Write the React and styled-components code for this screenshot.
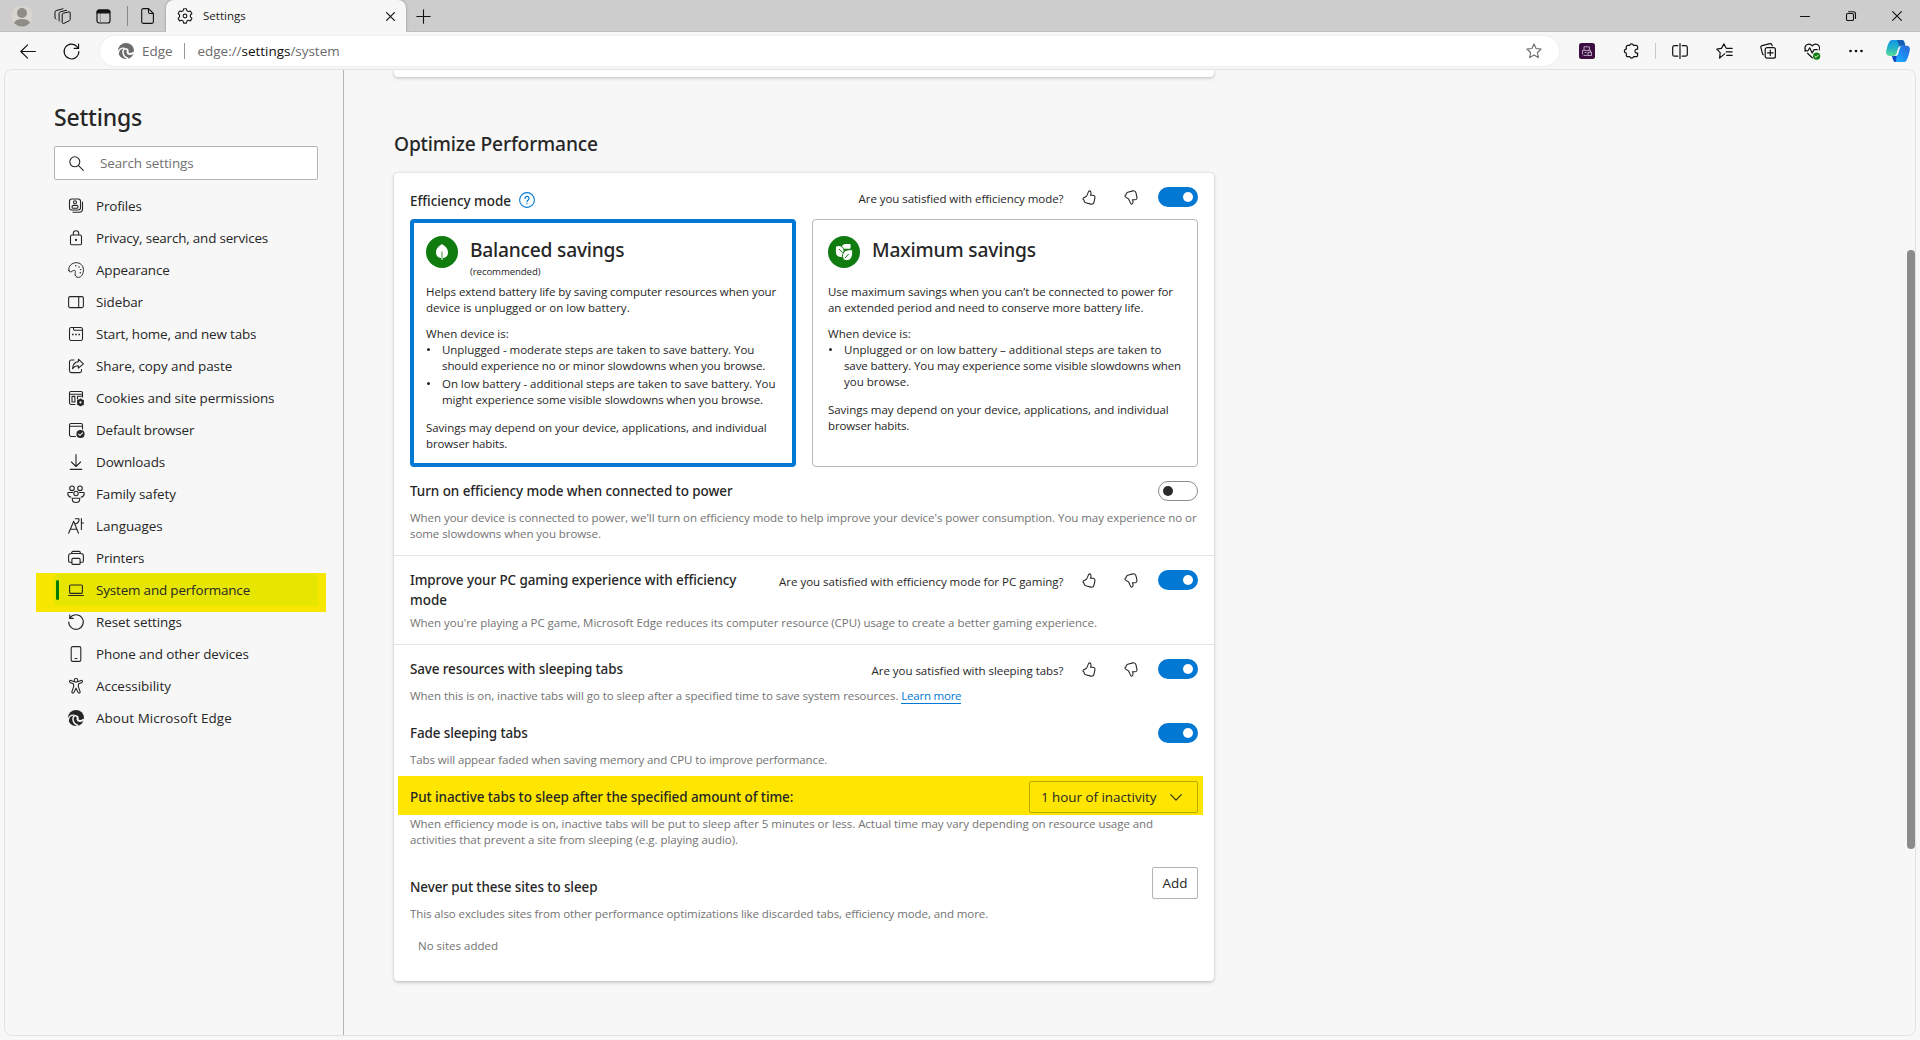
import React from "react";
import styled, { createGlobalStyle, css } from "styled-components";

const sans = `"Open Sans", "Noto Sans", "Segoe UI", sans-serif`;
const medium = `"Noto Sans", "Open Sans", "Segoe UI", sans-serif`;

const GlobalStyle = createGlobalStyle`
  *, *::before, *::after { box-sizing: border-box; }
  body {
    margin: 0;
    background: #f7f7f7;
    color: #262626;
    font-family: ${sans};
    overflow: hidden;
  }
  svg { display: block; flex: none; overflow: visible; }
`;

/* ---------- Icons ---------- */

const Stroke = styled.svg.attrs((p) => ({
  width: p.$w || 16,
  height: p.$h || 16,
  viewBox: `0 0 ${p.$w || 16} ${p.$h || 16}`,
  fill: "none",
  stroke: "currentColor",
  strokeLinecap: "round",
  strokeLinejoin: "round",
}))`
  stroke-width: ${(p) => p.$sw || 1.1};
`;

const STAR = "M8 .9l2.1 4.6 5 .6-3.7 3.4 1 5L8 12.100l-4.400 2.400 1-5L.9 6.100l5-.6z";

const Avatar = () => (
  <svg width="22" height="22" viewBox="0 0 22 22">
    <defs>
      <clipPath id="avatarClip"><circle cx="11" cy="11" r="10.500" /></clipPath>
    </defs>
    <circle cx="11" cy="11" r="10.500" fill="#d8d5d1" />
    <circle cx="11" cy="8" r="5" fill="#8f8b87" />
    <ellipse cx="11" cy="18.500" rx="8" ry="4.600" fill="#8f8b87" clipPath="url(#avatarClip)" />
  </svg>
);

const WorkspacesIcon = () => (
  <Stroke $w={17} $h={16} $sw={1}>
    <path d="M8.200 6.400a1.200 1.200 0 0 1 .9-1.100l6-1.400a.9.9 0 0 1 1.100.9v6.700a1.200 1.200 0 0 1-.5 1l-5.800 2.900a1.100 1.100 0 0 1-1.700-1z" />
    <path d="M5.700 13.200l-.6-.8V5.300A1.500 1.500 0 0 1 6.200 3.900L12.600 2.300M2 11.100l-1-1V4.200a1.600 1.600 0 0 1 1.200-1.600L9 .8" />
  </Stroke>
);

const TabActionsIcon = () => (
  <Stroke $w={15} $h={15} $sw={1.2}>
    <rect x="1" y="1" width="13" height="13" rx="2.200" />
    <path d="M1.300 3V2.800A1.500 1.500 0 0 1 2.900 1.200h9a1.700 1.700 0 0 1 1.700 1.700V3.800H1.300z" fill="currentColor" />
    <path d="M4.300 4v9.500" strokeWidth="1" opacity=".3" />
  </Stroke>
);

const PageIcon = () => (
  <Stroke $w={13} $h={16}>
    <path d="M2.300.6h5.200l4.900 4.900v8.300a1.600 1.600 0 0 1-1.600 1.600H2.300A1.600 1.600 0 0 1 .7 13.800V2.200A1.600 1.600 0 0 1 2.300.6zM7.500.8v3.500a1.200 1.200 0 0 0 1.200 1.200h3.500" />
  </Stroke>
);

const GearIcon = () => (
  <Stroke>
    <circle cx="8" cy="8" r="1.900" />
    <path d="M6.600.8h2.800l.5 2 1.500.8 2-.6 1.500 2.500-1.500 1.500v1.900l1.500 1.500-1.500 2.500-2-.6-1.500.8-.5 2H6.600l-.5-2-1.500-.8-2 .6L1.100 10.400l1.500-1.500V7L1.100 5.500 2.600 3l2 .6 1.500-.8z" />
  </Stroke>
);

const CrossIcon = ({ size = 9, width = 1.3 }) => (
  <Stroke $w={size} $h={size} $sw={width}>
    <path d={`M.6.6l${size - 1.2} ${size - 1.2}M${size - 0.6}.6L.6 ${size - 0.6}`} />
  </Stroke>
);

const PlusIcon = () => (
  <Stroke $w={15} $h={15} $sw={1.1}>
    <path d="M7.500.8v13.400M.8 7.500h13.400" />
  </Stroke>
);

const MinimizeIcon = () => (
  <Stroke $w={10} $h={10} $sw={1}>
    <path d="M.5 5.500h9" />
  </Stroke>
);

const RestoreIcon = () => (
  <Stroke $w={10} $h={10} $sw={1.1}>
    <rect x=".5" y="2.500" width="7" height="7" rx="1.300" />
    <path d="M2.600.7h4.700a2.200 2.200 0 0 1 2.200 2.200v4.600" />
  </Stroke>
);

const BackIcon = () => (
  <Stroke $w={16} $h={15} $sw={1.1}>
    <path d="M15.400 7.500H.8M7.600.8L.8 7.500l6.800 6.700" />
  </Stroke>
);

const ReloadIcon = () => (
  <Stroke $w={17} $h={17} $sw={1.1}>
    <path d="M15.900 8.500a7.400 7.400 0 1 1-1.600-4.600l1.200 1.400M15.600 1v4.400h-4.400" />
  </Stroke>
);

const EdgeIcon = () => (
  <svg width="16" height="16" viewBox="0 0 16 16">
    <circle cx="8" cy="8" r="8" fill="currentColor" />
    <g fill="none" stroke="var(--edge-gap)" strokeLinecap="round">
      <path d="M.3 10.600C.3 7 3.200 4.700 6 5.100" strokeWidth="1.300" />
      <path d="M8.600 6.100c-2.400-.9-4 .9-3.600 3.600.4 2.600 2.200 4.800 4.600 5.600" strokeWidth="1.500" />
      <path d="M9.100 6.500c1.300.8.300 2 .5 3 .4 1.900 3.900 1.900 5.800.3" strokeWidth="2" />
    </g>
  </svg>
);

const StarIcon = () => (
  <Stroke><path d={STAR} /></Stroke>
);

const ScannerExtensionIcon = () => (
  <svg width="16" height="16" viewBox="0 0 16 16">
    <rect width="16" height="16" rx="2.500" fill="#3b1040" />
    <g fill="none" stroke="#c9b4ce" strokeWidth=".9">
      <path d="M5 7V3.800h5.400V7M3.500 11.500V7.400h8V9M4.500 12.400h4M5.500 9.500h2" />
      <rect x="9" y="9.300" width="3.400" height="3.200" />
    </g>
  </svg>
);

const PuzzleIcon = () => (
  <Stroke $w={16} $h={16} $sw={1.2}>
    <path d="M3.700 2.400h2a1.900 1.900 0 0 1 3.700 0h2.800a1.400 1.400 0 0 1 1.400 1.400v2.400a2 2 0 1 0 0 3.800v2.300a1.400 1.400 0 0 1-1.400 1.400H9.500a1.900 1.900 0 0 1-3.700 0H3.700a1.400 1.400 0 0 1-1.400-1.400V10a1.900 1.900 0 0 1 0-3.800V3.800a1.400 1.400 0 0 1 1.400-1.400z" />
  </Stroke>
);

const SplitIcon = () => (
  <Stroke $w={16} $h={16} $sw={1.2}>
    <path d="M8 .6v14.800M5.800 2.600H2.500A1.800 1.800 0 0 0 .7 4.400v7a1.800 1.800 0 0 0 1.800 1.800h3.300M10.200 2.600h3.300a1.800 1.800 0 0 1 1.800 1.800v7a1.800 1.800 0 0 1-1.800 1.800h-3.300" />
  </Stroke>
);

const FavoritesIcon = () => (
  <Stroke $w={17} $h={16} $sw={1.2}>
    <path d="M8.700 10.800l-.7.6-4.400 3.600.6-5.300L.8 6.200l4.600-.8L8 .9l1.900 3.900M10.700 5.300h5.500M10.200 8.800h6M10.700 12.300h5.500" />
  </Stroke>
);

const CollectionsIcon = () => (
  <Stroke $w={16} $h={16} $sw={1.2}>
    <rect x="5.200" y="4.600" width="10.200" height="10.600" rx="2" />
    <path d="M10.300 7.200v5.400M7.600 9.900H13M12.200 2.700L11.800 1.600A1.600 1.600 0 0 0 9.900.6L2 2.600A1.600 1.600 0 0 0 .9 4.600l1.600 6.100a1.600 1.600 0 0 0 .9 1" />
  </Stroke>
);

const EssentialsIcon = () => (
  <Stroke $w={17} $h={17} $sw={1.2}>
    <path d="M1.400 7C-.2 3.500 3 .2 6.300 1.400c.8.300 1.400.8 2 1.500.6-.7 1.200-1.200 2-1.500 3.300-1.200 6.500 2.100 5 5.600M3.500 10.300l4.800 4.500M.7 7.800h3.200l1.800-3 2.500 5.200 1.900-3.400h3.200" />
    <circle cx="12.600" cy="13.200" r="3.600" fill="#107c10" stroke="none" />
    <path d="M11 13.400l1.100 1 2-2.200" stroke="#fff" strokeWidth="1" />
  </Stroke>
);

const DotsIcon = () => (
  <svg width="14" height="4" viewBox="0 0 14 4" fill="currentColor">
    <circle cx="1.500" cy="2" r="1.350" /><circle cx="7" cy="2" r="1.350" /><circle cx="12.500" cy="2" r="1.350" />
  </svg>
);

const CopilotIcon = () => (
  <svg width="24" height="22" viewBox="0 0 24 22">
    <defs>
      <linearGradient id="cpA" x1="0" y1="0" x2="0" y2="1">
        <stop offset="0" stopColor="#1597e4" /><stop offset=".5" stopColor="#22b3c9" /><stop offset="1" stopColor="#5bdc95" />
      </linearGradient>
      <linearGradient id="cpB" x1="1" y1="0" x2="0" y2="1">
        <stop offset="0" stopColor="#2f63d8" /><stop offset=".5" stopColor="#1b8cf2" /><stop offset="1" stopColor="#1fc0ff" />
      </linearGradient>
    </defs>
    <path d="M6.500 0h9.300c1.700 0 2.300 1.200 2.800 3l.8 2.700h-3.200c-2 0-2.900 1-3.400 2.700l-1.600 5.200c-.5 1.600-1.300 2.300-3 2.300H3.500C1 15.900-.3 14 .2 11.300 1 7.300 2 4 3.300 1.800 4.100.5 5 0 6.500 0z" fill="url(#cpA)" />
    <path d="M11 0h4.800c1.700 0 2.300 1.200 2.800 3l.8 2.700h-3.200c-1.300 0-2.100.4-2.700 1.100z" fill="#175fb5" />
    <path d="M17.500 22H10c-1.900 0-2.600-1.200-3.100-3L6 15.900h2.200c2 0 3-.9 3.500-2.600l1.600-5.200c.5-1.600 1.200-2.400 2.900-2.400h4.300c2.500 0 3.800 1.900 3.300 4.600-.8 4-1.800 7.300-3.100 9.700-.7 1.400-1.700 2-3.200 2z" fill="url(#cpB)" />
    <path d="M6 15.900h2.200c1.300 0 2-.4 2.600-1l-.9 7C8 22 7.400 20.800 6.900 19z" fill="#1a46c8" />
    <path d="M16.200 5.700c-2.200 0-3.400.7-4.200 3l-1.300 4.300c-.5 1.700-1.300 2.700-2.700 2.900 2 .3 3.600-.3 4.300-2.500l1.400-4.700c.5-1.600 1-2.800 2.500-3z" fill="#f7f7f7" />
  </svg>
);

const SearchIcon = () => (
  <Stroke $w={15} $h={15} $sw={1.1}>
    <circle cx="5.800" cy="5.800" r="5" /><path d="M9.600 9.600l4.700 4.700" />
  </Stroke>
);

const HelpIcon = () => (
  <Stroke>
    <circle cx="8" cy="8" r="7.400" />
    <path d="M6 6.400a2 2 0 1 1 3.300 1.500C8.500 8.500 8 8.800 8 9.700M8 11.600v.2" strokeWidth="1.200" />
  </Stroke>
);

const ThumbIcon = () => (
  <Stroke $w={14} $h={15} $sw={1.1}>
    <path d="M7.300.9c1.500 0 2 1.600 1.600 3.100L8.500 5.300h2.400c1.500 0 2.300 1.100 2 2.500l-.9 4.300c-.4 1.500-1.600 2.400-3.200 2l-5-1.300c-1-.3-1.400-.8-1.600-1.600L1.900 10c-.9-.3-1.200-1-.7-1.700.7-1 2.300-1 3.300-2.200C5.700 4.800 6.200.9 7.300.9z" />
  </Stroke>
);

const ChevronIcon = () => (
  <Stroke $w={12} $h={7} $sw={1.1}>
    <path d="M.7.7L6 6.200 11.300.7" />
  </Stroke>
);

const LeafBadge = () => (
  <svg width="32" height="32" viewBox="0 0 32 32">
    <circle cx="16" cy="16" r="16" fill="#107c10" />
    <path d="M16 8c2.500 1.700 6 4 6 8.500 0 3.500-2.300 5.500-5.500 5.700V24h-1v-1.800C12.300 22 10 20 10 16.500 10 12 13.500 9.700 16 8z" fill="#fff" />
    <path d="M16 15.500v6.800" stroke="#6fb06f" strokeWidth="1.400" />
  </svg>
);

const LeavesBadge = () => (
  <svg width="32" height="32" viewBox="0 0 32 32">
    <circle cx="16" cy="16" r="16" fill="#107c10" />
    <path d="M8 10.600c3.200-1.200 7-.4 7.500 3.400.3 2.500-.6 4.800-1.300 6.900-3.900.6-6.400-1.400-6.300-5.300z" fill="#fff" />
    <path d="M13.800 10c1.700-2.200 5.300-2 8.700-1.800.3 1.700.2 3.200-.4 4.600H16c-.5-1.300-1.200-2.100-2.200-2.800z" fill="#fff" />
    <path d="M24.600 13.700c.3 5.800-.6 10.900-6 10.900-5.500 0-5.300-7.600-.9-10 1.700-.9 4.200-.9 6.900-.9z" fill="#fff" stroke="#107c10" strokeWidth="1" />
    <path d="M11.300 13.300l3.200 3.400M17.200 21.800l3.300-3.600" stroke="#107c10" strokeWidth="1" strokeLinecap="round" />
  </svg>
);

const navIcons = {
  profiles: (
    <Stroke>
      <rect x="1.500" y="1" width="11" height="11" rx="2.200" />
      <circle cx="7" cy="4.300" r="1.500" />
      <rect x="4" y="7.400" width="6" height="2.900" rx="1.300" />
      <path d="M14.500 4v7a3.200 3.200 0 0 1-3.200 3.200H5" />
    </Stroke>
  ),
  privacy: (
    <Stroke>
      <rect x="2.500" y="5" width="11" height="9.800" rx="1.400" />
      <path d="M5.300 4.800V3.400a2.700 2.700 0 0 1 5.400 0v1.400" />
      <circle cx="8" cy="9.900" r=".6" fill="currentColor" />
    </Stroke>
  ),
  appearance: (
    <Stroke $sw={1}>
      <path d="M.9 8.500C0 4 4 .7 8.500.7c3.800 0 6.700 2.900 6.900 6.600.2 3.900-1.600 8.100-5 8.100-2.200 0-3.600-1.700-3.300-3.700.2-1.500.8-3-.6-3.300-1.800-.3-2.700 1.700-4.300 1.500C1.500 9.800 1 9.300.9 8.500z" />
      <path d="M7.800 3.700h.1M11 4.900h.1M12.600 7.600h.1M12.200 10.700h.1" strokeWidth="1.400" />
    </Stroke>
  ),
  sidebar: (
    <Stroke>
      <rect x=".6" y="2.600" width="14.800" height="11" rx="1.500" /><path d="M10.700 2.700v10.800" />
    </Stroke>
  ),
  start: (
    <Stroke>
      <rect x="1.500" y="1.500" width="13" height="13" rx="1.800" />
      <path d="M5.500 1.700V3a1.200 1.200 0 0 0 1.200 1.200h7.600" />
      <path d="M4 8.500h1.600M7.200 8.500h1.600M10.400 8.500H12" strokeWidth="1.700" strokeLinecap="butt" />
    </Stroke>
  ),
  share: (
    <Stroke>
      <path d="M6 2H3.300A1.800 1.800 0 0 0 1.500 3.800v9A1.800 1.800 0 0 0 3.300 14.600h8.400a1.800 1.800 0 0 0 1.800-1.800v-1.300" />
      <path d="M10.400 1.200l5 4.600-5 4.400V7.700C7.800 7.500 6 8.600 4.500 10.600c.3-3.800 2.400-6.600 5.900-7z" />
    </Stroke>
  ),
  cookies: (
    <Stroke>
      <path d="M7 14.500H3.300a1.800 1.800 0 0 1-1.800-1.800V2.800A1.300 1.300 0 0 1 2.800 1.500h10.400a1.300 1.300 0 0 1 1.300 1.300V7M1.500 4.200h13M9.500 6.300h5M9.500 6.300V9" />
      <rect x="4" y="6.400" width="2.900" height="5.600" />
      <circle cx="12.500" cy="12.400" r="2.400" strokeWidth="2" />
      <path d="M12.500 8.600v7.600M9.200 10.500l6.600 3.800M15.800 10.500l-6.600 3.800" strokeWidth="1.500" strokeLinecap="butt" />
      <circle cx="12.500" cy="12.400" r="1.100" fill="#f7f7f7" stroke="none" />
    </Stroke>
  ),
  browser: (
    <Stroke>
      <path d="M7.500 14.500H3.300a1.800 1.800 0 0 1-1.800-1.800V3A1.500 1.500 0 0 1 3 1.500h10A1.500 1.500 0 0 1 14.500 3v4M1.500 4.300h13" />
      <circle cx="12.500" cy="12" r="4.100" fill="currentColor" stroke="none" />
      <path d="M10.600 12.200l1.400 1.200 2.500-2.600" stroke="#f7f7f7" />
    </Stroke>
  ),
  downloads: (
    <Stroke>
      <path d="M8 .5v11.700M3.400 8L8 12.500 12.600 8M2.300 15.400h11.400" />
    </Stroke>
  ),
  family: (
    <Stroke $w={18} $h={18}>
      <circle cx="5" cy="3.300" r="2.300" /><circle cx="13" cy="3.300" r="2.300" /><circle cx="9" cy="8.500" r="2.200" />
      <path d="M5.300 13.200h7.400v1c0 2-1.500 3.300-3.700 3.300s-3.700-1.300-3.700-3.300zM5.500 7.500H.9c-.4 2.300.9 4.200 3.100 4.700M12.500 7.500h4.600c.4 2.300-.9 4.200-3.100 4.700" />
    </Stroke>
  ),
  languages: (
    <Stroke>
      <path d="M.6 15.300L5.700 3.300 10.500 15.300M2.400 11.200h6.600M7.300.8H11c.2 2.300-1.200 4.500-3.700 5.300M13.400.5v11M13.500 5h2" />
    </Stroke>
  ),
  printers: (
    <Stroke>
      <path d="M3.700 3.500V2.700A1.300 1.300 0 0 1 5 1.400h6a1.300 1.300 0 0 1 1.300 1.300v.8M3.800 12.300H2A1.400 1.400 0 0 1 .6 10.900V6a2.500 2.500 0 0 1 2.500-2.500h9.800A2.500 2.500 0 0 1 15.400 6v4.900a1.400 1.400 0 0 1-1.400 1.400h-1.800" />
      <rect x="3.900" y="8.400" width="8.200" height="6" rx="1" />
    </Stroke>
  ),
  system: (
    <Stroke>
      <rect x="1.600" y="3" width="12.800" height="8.400" rx="1.200" /><path d="M.6 13.500h14.800" />
    </Stroke>
  ),
  reset: (
    <Stroke>
      <path d="M2.100 3.700A7.300 7.300 0 1 1 .7 8M1.700.8v3.600h3.600" />
    </Stroke>
  ),
  phone: (
    <Stroke>
      <rect x="3.200" y=".6" width="9.600" height="14.800" rx="1.500" /><path d="M7 12.500h2" />
    </Stroke>
  ),
  accessibility: (
    <Stroke>
      <circle cx="8" cy="2.300" r="1.800" />
      <path d="M6.200 3.800L3 2.500c-1.400-.5-2.200 1.400-.8 2l3.400 1.400v3L3.900 13.600c-.5 1.500 1.400 2.200 2 .8L8 10.200l2.100 4.200c.6 1.400 2.500.7 2-.8L10.400 8.900v-3l3.400-1.400c1.400-.6.6-2.500-.8-2L9.800 3.800" />
    </Stroke>
  ),
  about: <EdgeIcon />,
};

/* ---------- Browser chrome ---------- */

const Window = styled.div`
  display: flex;
  flex-direction: column;
  width: 1920px;
  height: 1040px;
  background: #f7f7f7;
`;

const TabStrip = styled.header`
  display: flex;
  height: 32px;
  flex: none;
  background: #cdcdcd;
  box-shadow: inset 0 -1px 0 #bfbfbf;
  color: #1b1b1b;
`;

const Slot = styled.div`
  display: flex;
  align-items: center;
  justify-content: center;
  flex: none;
  width: ${(p) => p.$w}px;
  height: ${(p) => p.$h || 32}px;
  color: #111;
`;

const Divider = styled.div`
  flex: none;
  width: 1px;
  height: ${(p) => p.$h}px;
  margin: ${(p) => p.$m || 0};
  background: ${(p) => p.$color};
`;

const Tab = styled.div`
  display: flex;
  align-items: center;
  flex: none;
  width: 240px;
  height: 32px;
  padding: 0 11px;
  border-radius: 8px 8px 0 0;
  background: #f7f7f7;
  box-shadow: 0 0 3px rgba(0, 0, 0, 0.3);
  clip-path: inset(0 -4px 0 -4px);
`;

const TabTitle = styled.span`
  flex: 1;
  margin-left: 10px;
  font-size: 11.52px;
  line-height: 16px;
  letter-spacing: 0.02px;
`;

const Spacer = styled.div`
  flex: 1;
`;

const Toolbar = styled.div`
  display: flex;
  flex: none;
  height: 37px;
  padding: 4px 3px 0 0;
`;

const AddressBar = styled.div`
  display: flex;
  align-items: center;
  flex: 1;
  height: 30px;
  margin-left: 13px;
  padding: 0 17px 0 18px;
  border-radius: 15px;
  background: #fff;
  box-shadow: 0 0 3px rgba(0, 0, 0, 0.08);
  color: #6b6b6b;
  --edge-gap: #fff;
`;

const AddressText = styled.span`
  margin-left: ${(p) => p.$ml}px;
  font-size: 13.44px;
  line-height: 20px;
  white-space: nowrap;

  b {
    font-weight: 400;
    color: #111;
  }
`;

/* ---------- Page frame ---------- */

const Page = styled.div`
  display: flex;
  flex: 1;
  min-height: 0;
  margin: 0 4px 4px;
  border: 1px solid #e2e2e2;
  border-radius: 8px;
  background: #f7f7f7;
  overflow: hidden;
`;

const Sidebar = styled.aside`
  flex: none;
  width: 339px;
  padding: 31px 24px 0 49px;
  border-right: 1px solid #b5b5b5;
`;

const SidebarTitle = styled.h1`
  margin: 0 0 13px;
  font: 500 23.04px/32px ${medium};
  letter-spacing: -0.2px;
`;

const SearchBox = styled.div`
  display: flex;
  align-items: center;
  width: 264px;
  height: 34px;
  padding-left: 14px;
  border: 1px solid #b4b4b4;
  border-radius: 2px;
  background: #fff;
  color: #262626;
`;

const SearchHint = styled.span`
  margin-left: 16px;
  color: #707070;
  font-size: 13.44px;
  line-height: 20px;
  letter-spacing: -0.09px;
`;

const Nav = styled.nav`
  display: flex;
  flex-direction: column;
  width: 264px;
  margin-top: 10px;
  isolation: isolate;
  --edge-gap: #f7f7f7;
`;

const NavItem = styled.a`
  display: flex;
  align-items: center;
  height: 32px;
  border-radius: 3px;
  font-size: 13.44px;
  line-height: 20px;
  letter-spacing: ${(p) => p.$ls}px;
  white-space: nowrap;

  ${(p) =>
    p.$active &&
    css`
      position: relative;
      background: #e6e600;

      &::before {
        content: "";
        position: absolute;
        inset: -1px -8px -6px -18px;
        background: #f7e600;
        z-index: -1;
      }
      &::after {
        content: "";
        position: absolute;
        left: 2px;
        top: 6px;
        width: 3px;
        height: 20px;
        border-radius: 1.5px;
        background: #007a00;
      }
    `}
`;

const NavIconBox = styled.span`
  display: flex;
  align-items: center;
  justify-content: center;
  width: 20px;
  margin: 0 10px 0 12px;
`;

const Main = styled.main`
  display: flex;
  flex-direction: column;
  flex: 1;
  padding-left: 50px;
`;

const Scrollbar = styled.div`
  flex: none;
  width: 8px;
  height: 599px;
  margin-top: 180px;
  border-radius: 4px;
  background: #8b8b8b;
`;

const cardShadow = css`
  background: #fff;
  box-shadow: 0 1.6px 3.6px rgba(0, 0, 0, 0.16), 0 0 2.900px rgba(0, 0, 0, 0.12);
`;

const CardTail = styled.div`
  width: 820px;
  height: 7px;
  flex: none;
  border-radius: 0 0 4px 4px;
  ${cardShadow}
`;

const SectionTitle = styled.h2`
  margin: 53px 0 15px;
  font: 500 19.2px/28px ${medium};
  letter-spacing: -0.16px;
`;

const Card = styled.section`
  width: 820px;
  height: 808px;
  border-radius: 4px;
  ${cardShadow}
`;

const Section = styled.div`
  padding: 14px 16px ${(p) => p.$pb}px;

  & + & {
    border-top: 1px solid #e5e5e5;
  }
`;

const Row = styled.div`
  display: flex;
  align-items: flex-start;
  margin-top: ${(p) => p.$mt || 0}px;
  min-height: ${(p) => p.$h || 20}px;
`;

const RowTitle = styled.h3`
  display: flex;
  flex: 1;
  margin: ${(p) => p.$mt || 0}px 0 0;
  font: 500 13.44px/20px ${medium};
  letter-spacing: ${(p) => p.$ls}px;
  white-space: nowrap;
`;

const HelpButton = styled.span`
  margin: 1px 0 0 8.5px;
  color: #0078d4;
`;

const Lines = styled.p`
  margin: ${(p) => p.$mt || 0}px 0 0 ${(p) => p.$ml || 0}px;
  color: ${(p) => (p.$dark ? "#262626" : "#737373")};
  font-size: 11.52px;
  line-height: 16px;
  white-space: nowrap;
`;

const Line = styled.span`
  display: block;
  letter-spacing: ${(p) => p.$ls}px;
`;

const Link = styled.a`
  display: inline-block;
  height: 16px;
  border-bottom: 1px solid #0078d4;
  color: #0078d4;
  letter-spacing: -0.24px;
`;

const FeedbackBox = styled.div`
  display: flex;
  align-items: flex-start;
  margin-right: 20px;

  svg {
    margin-top: 3px;
  }
`;

const FeedbackText = styled.span`
  margin: 4px 18.500px 0 0;
  font-size: 11.52px;
  line-height: 16px;
  letter-spacing: ${(p) => p.$ls}px;
  white-space: nowrap;
`;

const ThumbDown = styled.span`
  display: flex;
  margin-left: 28px;

  svg {
    transform: scaleY(-1);
  }
`;

const Switch = styled.span`
  display: flex;
  align-items: center;
  justify-content: ${(p) => (p.$on ? "flex-end" : "flex-start")};
  flex: none;
  width: 40px;
  height: 20px;
  padding: 0 ${(p) => (p.$on ? 5 : 4)}px;
  border: ${(p) => (p.$on ? "0" : "1px solid #8a8a8a")};
  border-radius: 10px;
  background: ${(p) => (p.$on ? "#0078d4" : "#fff")};

  &::after {
    content: "";
    width: 10px;
    height: 10px;
    border-radius: 50%;
    background: ${(p) => (p.$on ? "#fff" : "#2b2b2b")};
  }
`;

const Options = styled.div`
  display: grid;
  grid-template-columns: 386px 386px;
  gap: 16px;
`;

const Option = styled.div`
  height: 248px;
  border-radius: 4px;
  border: ${(p) => (p.$selected ? "4px solid #0078d4" : "1px solid #b8b8b8")};
  padding: ${(p) => (p.$selected ? "13px 12px" : "16px 15px")};
`;

const OptionHead = styled.div`
  display: flex;
  gap: 12px;
  height: 48px;
`;

const OptionTitle = styled.h4`
  margin: 0;
  font: 500 19.2px/28px ${medium};
  letter-spacing: ${(p) => p.$ls}px;
`;

const OptionNote = styled.div`
  padding-top: 1px;
  font-size: 9.6px;
  line-height: 14px;
  letter-spacing: -0.08px;
`;

const BulletItem = styled.div`
  display: flex;
  margin-top: ${(p) => p.$mt || 0}px;

  &::before {
    content: "";
    width: 3px;
    height: 3px;
    margin: 6px 12px 0 1px;
    border-radius: 50%;
    background: #262626;
  }
`;

const Highlight = styled.div`
  display: flex;
  align-items: flex-start;
  height: 39px;
  margin: 8px -5px 0 -12px;
  padding: 5px 5px 0 12px;
  background: #ffe600;
`;

const Dropdown = styled.span`
  display: flex;
  align-items: center;
  justify-content: space-between;
  width: 169px;
  height: 32px;
  padding: 0 15px 0 11px;
  border: 1px solid #b9a800;
  border-radius: 2px;
  font-size: 13.44px;
  line-height: 20px;
  letter-spacing: -0.035px;
`;

const AddButton = styled.button`
  width: 46px;
  height: 32px;
  padding: 0;
  border: 1px solid #b4b4b4;
  border-radius: 2px;
  background: #fff;
  color: #262626;
  font: 400 13.44px/20px ${sans};
`;

/* ---------- Data ---------- */

const navItems = [
  ["profiles", "Profiles", -0.15],
  ["privacy", "Privacy, search, and services", -0.178],
  ["appearance", "Appearance", -0.15],
  ["sidebar", "Sidebar", -0.1],
  ["start", "Start, home, and new tabs", -0.152],
  ["share", "Share, copy and paste", -0.085],
  ["cookies", "Cookies and site permissions", -0.115],
  ["browser", "Default browser", -0.17],
  ["downloads", "Downloads", -0.11],
  ["family", "Family safety", -0.12],
  ["languages", "Languages", -0.03],
  ["printers", "Printers", -0.15],
  ["system", "System and performance", -0.166],
  ["reset", "Reset settings", -0.08],
  ["phone", "Phone and other devices", -0.095],
  ["accessibility", "Accessibility", 0],
  ["about", "About Microsoft Edge", 0.06],
];

const Feedback = ({ text, ls }) => (
  <FeedbackBox>
    <FeedbackText $ls={ls}>{text}</FeedbackText>
    <ThumbIcon />
    <ThumbDown><ThumbIcon /></ThumbDown>
  </FeedbackBox>
);

const SettingsSidebar = () => (
  <Sidebar>
    <SidebarTitle>Settings</SidebarTitle>
    <SearchBox>
      <SearchIcon />
      <SearchHint>Search settings</SearchHint>
    </SearchBox>
    <Nav>
      {navItems.map(([id, label, ls]) => (
        <NavItem key={id} $ls={ls} $active={id === "system"}>
          <NavIconBox>{navIcons[id]}</NavIconBox>
          {label}
        </NavItem>
      ))}
    </Nav>
  </Sidebar>
);

const BrowserChrome = () => (
  <>
    <TabStrip>
      <Slot $w={44}><Avatar /></Slot>
      <Slot $w={36}><WorkspacesIcon /></Slot>
      <Slot $w={47}><TabActionsIcon /></Slot>
      <Divider $h={20} $m="6px 0 0" $color="#8a8a8a" />
      <Slot $w={38}><PageIcon /></Slot>
      <Tab>
        <GearIcon />
        <TabTitle>Settings</TabTitle>
        <CrossIcon />
      </Tab>
      <Slot $w={35}><PlusIcon /></Slot>
      <Spacer />
      <Slot $w={46}><MinimizeIcon /></Slot>
      <Slot $w={46}><RestoreIcon /></Slot>
      <Slot $w={46}><CrossIcon size={10} width={1.1} /></Slot>
    </TabStrip>
    <Toolbar>
      <Slot $w={56} $h={30}><BackIcon /></Slot>
      <Slot $w={31} $h={30}><ReloadIcon /></Slot>
      <AddressBar>
        <EdgeIcon />
        <AddressText $ml={8}>Edge</AddressText>
        <Divider $h={16} $m="0 0 0 11px" $color="#9a9a9a" />
        <AddressText $ml={13}>edge://<b>settings</b>/system</AddressText>
        <Spacer />
        <StarIcon />
      </AddressBar>
      <Slot $w={56} $h={30}><ScannerExtensionIcon /></Slot>
      <Slot $w={33} $h={30}><PuzzleIcon /></Slot>
      <Divider $h={16} $m="7px 0 0 7px" $color="#c8c8c8" />
      <Slot $w={47} $h={30}><SplitIcon /></Slot>
      <Slot $w={42} $h={30}><FavoritesIcon /></Slot>
      <Slot $w={46} $h={30}><CollectionsIcon /></Slot>
      <Slot $w={42} $h={30}><EssentialsIcon /></Slot>
      <Slot $w={46} $h={30}><DotsIcon /></Slot>
      <Slot $w={38} $h={30}><CopilotIcon /></Slot>
    </Toolbar>
  </>
);

const SavingsOptions = () => (
  <Options>
    <Option $selected>
      <OptionHead>
        <LeafBadge />
        <div>
          <OptionTitle $ls={-0.22}>Balanced savings</OptionTitle>
          <OptionNote>(recommended)</OptionNote>
        </div>
      </OptionHead>
      <Lines $dark>
        <Line $ls={-0.08}>Helps extend battery life by saving computer resources when your</Line>
        <Line $ls={0}>device is unplugged or on low battery.</Line>
      </Lines>
      <Lines $dark $mt={10}><Line $ls={0}>When device is:</Line></Lines>
      <BulletItem>
        <Lines $dark>
          <Line $ls={-0.053}>Unplugged - moderate steps are taken to save battery. You</Line>
          <Line $ls={-0.102}>should experience no or minor slowdowns when you browse.</Line>
        </Lines>
      </BulletItem>
      <BulletItem $mt={2}>
        <Lines $dark>
          <Line $ls={-0.058}>On low battery - additional steps are taken to save battery. You</Line>
          <Line $ls={-0.082}>might experience some visible slowdowns when you browse.</Line>
        </Lines>
      </BulletItem>
      <Lines $dark $mt={12}>
        <Line $ls={-0.05}>Savings may depend on your device, applications, and individual</Line>
        <Line $ls={-0.14}>browser habits.</Line>
      </Lines>
    </Option>
    <Option>
      <OptionHead>
        <LeavesBadge />
        <OptionTitle $ls={-0.16}>Maximum savings</OptionTitle>
      </OptionHead>
      <Lines $dark>
        <Line $ls={-0.06}>Use maximum savings when you can’t be connected to power for</Line>
        <Line $ls={-0.074}>an extended period and need to conserve more battery life.</Line>
      </Lines>
      <Lines $dark $mt={10}><Line $ls={0}>When device is:</Line></Lines>
      <BulletItem>
        <Lines $dark>
          <Line $ls={-0.012}>Unplugged or on low battery – additional steps are taken to</Line>
          <Line $ls={-0.12}>save battery. You may experience some visible slowdowns when</Line>
          <Line $ls={0}>you browse.</Line>
        </Lines>
      </BulletItem>
      <Lines $dark $mt={12}>
        <Line $ls={-0.05}>Savings may depend on your device, applications, and individual</Line>
        <Line $ls={-0.14}>browser habits.</Line>
      </Lines>
    </Option>
  </Options>
);

export default function App() {
  return (
    <Window>
      <GlobalStyle />
      <BrowserChrome />
      <Page>
        <SettingsSidebar />
        <Main>
          <CardTail />
          <SectionTitle>Optimize Performance</SectionTitle>
          <Card>
            <Section $pb={13}>
              <Row $h={32}>
                <RowTitle $mt={4} $ls={-0.02}>
                  Efficiency mode
                  <HelpButton><HelpIcon /></HelpButton>
                </RowTitle>
                <Feedback text="Are you satisfied with efficiency mode?" ls={-0.06} />
                <Switch $on />
              </Row>
              <SavingsOptions />
              <Row $mt={14}>
                <RowTitle $ls={-0.05}>Turn on efficiency mode when connected to power</RowTitle>
                <Switch />
              </Row>
              <Lines $mt={9}>
                <Line $ls={-0.058}>When your device is connected to power, we'll turn on efficiency mode to help improve your device's power consumption. You may experience no or</Line>
                <Line $ls={-0.07}>some slowdowns when you browse.</Line>
              </Lines>
            </Section>

            <Section $pb={13}>
              <Row>
                <RowTitle>
                  <span>
                    <Line $ls={-0.07}>Improve your PC gaming experience with efficiency</Line>
                    <Line $ls={0}>mode</Line>
                  </span>
                </RowTitle>
                <Feedback text="Are you satisfied with efficiency mode for PC gaming?" ls={-0.02} />
                <Switch $on />
              </Row>
              <Lines $mt={5}>
                <Line $ls={-0.04}>When you're playing a PC game, Microsoft Edge reduces its computer resource (CPU) usage to create a better gaming experience.</Line>
              </Lines>
            </Section>

            <Section $pb={27}>
              <Row>
                <RowTitle $ls={-0.11}>Save resources with sleeping tabs</RowTitle>
                <Feedback text="Are you satisfied with sleeping tabs?" ls={-0.04} />
                <Switch $on />
              </Row>
              <Lines $mt={9}>
                <Line $ls={-0.06}>
                  When this is on, inactive tabs will go to sleep after a specified time to save system resources. <Link>Learn more</Link>
                </Line>
              </Lines>
              <Row $mt={19}>
                <RowTitle $ls={-0.12}>Fade sleeping tabs</RowTitle>
                <Switch $on />
              </Row>
              <Lines $mt={9}>
                <Line $ls={-0.102}>Tabs will appear faded when saving memory and CPU to improve performance.</Line>
              </Lines>
              <Highlight>
                <RowTitle $mt={6} $ls={-0.07}>Put inactive tabs to sleep after the specified amount of time:</RowTitle>
                <Dropdown>1 hour of inactivity <ChevronIcon /></Dropdown>
              </Highlight>
              <Lines $mt={1}>
                <Line $ls={-0.052}>When efficiency mode is on, inactive tabs will be put to sleep after 5 minutes or less. Actual time may vary depending on resource usage and</Line>
                <Line $ls={-0.032}>activities that prevent a site from sleeping (e.g. playing audio).</Line>
              </Lines>
              <Row $mt={19} $h={32}>
                <RowTitle $mt={10} $ls={-0.09}>Never put these sites to sleep</RowTitle>
                <AddButton>Add</AddButton>
              </Row>
              <Lines $mt={7}>
                <Line $ls={-0.097}>This also excludes sites from other performance optimizations like discarded tabs, efficiency mode, and more.</Line>
              </Lines>
              <Lines $mt={16} $ml={8}><Line $ls={0}>No sites added</Line></Lines>
            </Section>
          </Card>
        </Main>
        <Scrollbar />
      </Page>
    </Window>
  );
}
